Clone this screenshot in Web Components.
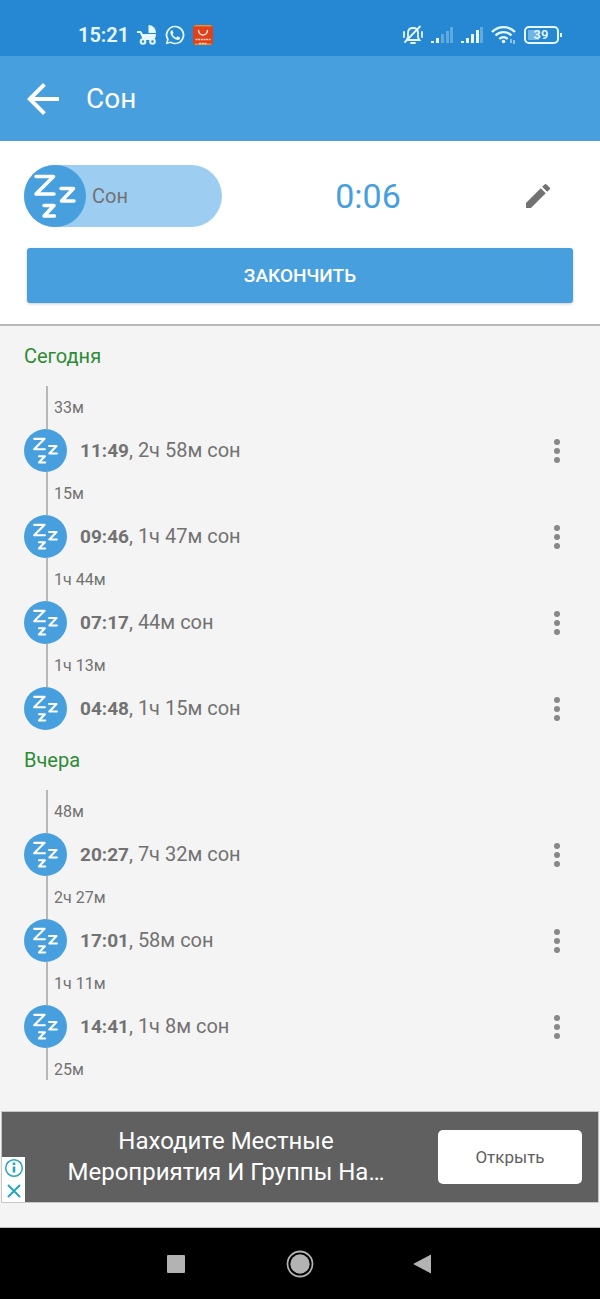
<!DOCTYPE html>
<html lang="ru">
<head>
<meta charset="utf-8">
<meta name="viewport" content="width=device-width, initial-scale=1">
<title>Сон</title>
<style>
  body {
    --blue: #489fdd;
    --grey: #727272;
    margin: 0;
    height: 100vh;
    display: flex;
    flex-direction: column;
    background: #f4f4f4;
    color: var(--grey);
    font-family: Roboto, "Liberation Sans", sans-serif;
    font-size: 20px;
  }
  main { flex: 1; min-height: 0; overflow: hidden; }
</style>
</head>
<body>
  <status-bar></status-bar>
  <app-header>Сон</app-header>
  <sleep-timer label="Сон" time="0:06"></sleep-timer>
  <main>
    <day-log>
      <span slot="title">Сегодня</span>
      <log-gap>33м</log-gap>
      <log-entry time="11:49">2ч 58м сон</log-entry>
      <log-gap>15м</log-gap>
      <log-entry time="09:46">1ч 47м сон</log-entry>
      <log-gap>1ч 44м</log-gap>
      <log-entry time="07:17">44м сон</log-entry>
      <log-gap>1ч 13м</log-gap>
      <log-entry time="04:48">1ч 15м сон</log-entry>
    </day-log>
    <day-log>
      <span slot="title">Вчера</span>
      <log-gap>48м</log-gap>
      <log-entry time="20:27">7ч 32м сон</log-entry>
      <log-gap>2ч 27м</log-gap>
      <log-entry time="17:01">58м сон</log-entry>
      <log-gap>1ч 11м</log-gap>
      <log-entry time="14:41">1ч 8м сон</log-entry>
      <log-gap>25м</log-gap>
    </day-log>
  </main>
  <ad-banner>Находите Местные<br>Мероприятия И Группы На…</ad-banner>
  <nav-bar></nav-bar>

<script>
const base = `
  :host, * { box-sizing: border-box; }
  button { font: inherit; color: inherit; border: 0; padding: 0; margin: 0; background: none; cursor: pointer; }
  svg { display: block; }
`;

function define(name, render) {
  customElements.define(name, class extends HTMLElement {
    constructor() {
      super();
      this.attachShadow({ mode: 'open' });
    }
    connectedCallback() {
      const template = document.createElement('template');
      template.innerHTML = render(this);
      this.shadowRoot.replaceChildren(template.content.cloneNode(true));
    }
  });
}

define('status-bar', () => `
  <style>${base}
    :host { display: flex; flex: none; justify-content: space-between; align-items: center;
      height: 56px; padding: 14px 38px 0 78px; background: #2688d2; color: #e6f7ff; }
    div { display: flex; align-items: center; gap: 8px; }
    time { font-size: 20px; font-weight: 600; line-height: 24px; }
    .battery { position: relative; }
    .battery span { position: absolute; inset: 0 4px 0 0; text-align: center;
      font-size: 13px; font-weight: 600; line-height: 18px; }
  </style>
  <div>
    <time>15:21</time>
    <svg width="20" height="20" viewBox="0 0 20 20" fill="currentColor" aria-hidden="true">
      <path d="M11.500 0a7.500 8 0 0 1 7.500 8h-7.500z"/>
      <path d="M0 6h4l1.800 3H19c0 3-1 5-2.500 6H6L3 8H0z"/>
      <circle cx="6" cy="16.500" r="2.300" fill="#2688d2" stroke="currentColor" stroke-width="2"/>
      <circle cx="15.500" cy="16.500" r="2.300" fill="#2688d2" stroke="currentColor" stroke-width="2"/>
    </svg>
    <svg width="20" height="20" viewBox="0 0 24 24" fill="currentColor" aria-hidden="true">
      <path d="M12 .8A11.200 11.200 0 0 0 2.400 17.700L.8 23.200l5.700-1.500A11.200 11.200 0 1 0 12 .8zm0 2a9.200 9.200 0 1 1-4.900 17l-3.500.8 1-3.400A9.200 9.200 0 0 1 12 2.800z"/>
      <path d="M8.300 6.200c-.5 0-1.900 1-1.900 2.900 0 4 5.300 8.900 9 8.900 1.700 0 2.900-1.200 2.900-2.700l-3.500-1.900-1.500 1.800c-2-.8-3.400-2.200-4.300-4l1.200-1.600-1.300-3.400z"/>
    </svg>
    <svg width="20" height="20" viewBox="0 0 20 20" aria-hidden="true">
      <rect width="20" height="20" rx="3" fill="#e2401b"/>
      <path d="M2 0h16l1.500 1.500H.5zM1 18.500h18L18 20H2z" fill="#f08a24"/>
      <path d="M5.500 5.500c1 6 8 6 9 0" fill="none" stroke="#fff3e8" stroke-width="1.400" stroke-linecap="round"/>
      <path d="M2.500 14.500h15M6 18.500h8" stroke="#ffd8c4" stroke-width="1.500" stroke-dasharray="2 .7"/>
    </svg>
  </div>
  <div>
    <svg width="20" height="20" viewBox="0 0 20 20" fill="none" stroke="currentColor" stroke-width="1.800" aria-hidden="true">
      <path d="M3.500 15h13L15 12.500V8c0-3-2-5-5-5S5 5 5 8v4.500zM8 18h4M1 7v5M19 7v5M17 1.500 2 17" stroke-linecap="round"/>
    </svg>
    <svg width="22" height="18" viewBox="0 0 22 18" fill="currentColor" aria-hidden="true">
      <path d="M0 15h3v2H0zM5 12h3v5H5z"/><path opacity=".3" d="M10 8h3v9h-3zM15 5h3v12h-3zM19 1h3v16h-3z"/>
    </svg>
    <svg width="22" height="18" viewBox="0 0 22 18" fill="currentColor" aria-hidden="true">
      <path d="M0 15h3v2H0zM5 12h3v5H5zM10 8h3v9h-3zM15 4h3v13h-3z"/><path opacity=".3" d="M19 1h3v16h-3z"/>
    </svg>
    <svg width="25" height="20" viewBox="0 0 25 20" fill="none" stroke="currentColor" stroke-width="2.400" aria-hidden="true">
      <path d="M1 7c6.500-6.500 16.500-6.500 23 0M4.500 10.500c4.500-4.500 11.500-4.500 16 0M8.300 14c2.500-2.500 5.900-2.500 8.400 0"/>
      <circle cx="12.500" cy="16.500" r="1.800" fill="currentColor" stroke="none"/>
      <path d="M20 14v4M23 15v4" stroke-width="1.300" opacity=".8"/>
    </svg>
    <div class="battery">
      <svg width="38" height="18" viewBox="0 0 38 18" fill="none" aria-hidden="true">
        <rect x="4" y="4" width="11" height="10" fill="currentColor" opacity=".4"/>
        <rect x="1" y="1" width="33" height="16" rx="4" stroke="currentColor" stroke-width="2"/>
        <path d="M37 7v4" stroke="currentColor" stroke-width="2"/>
      </svg>
      <span>39</span>
    </div>
  </div>
`);

define('app-header', () => `
  <style>${base}
    :host { display: flex; flex: none; align-items: center; gap: 19px; height: 85px; padding-left: 19px;
      background: var(--blue); color: #fff; }
    h1 { margin: 0; font-size: 28px; font-weight: 400; line-height: 36px; }
  </style>
  <button aria-label="Назад">
    <svg width="48" height="48" viewBox="0 0 24 24" fill="currentColor"><path d="M20 11H7.830l5.590-5.590L12 4l-8 8 8 8 1.410-1.410L7.830 13H20z"/></svg>
  </button>
  <h1><slot></slot></h1>
`);

define('zz-icon', () => `
  <style>
    :host { display: block; flex: none; border-radius: 50%; background: var(--blue); color: #fff; }
    svg { display: block; width: 100%; height: 100%; }
  </style>
  <svg viewBox="0 0 62 62" fill="none" stroke="currentColor" stroke-width="3.500" stroke-linecap="round" stroke-linejoin="round" aria-hidden="true">
    <path d="M12 11.500h17.500L12 29h18M37 23.500h12.500L37.500 36H50M20 40.500h10L20 51h10.500"/>
  </svg>
`);

define('sleep-timer', host => `
  <style>${base}
    :host { display: block; flex: none; padding: 24px 27px 21px; background: #fff; border-bottom: 2px solid #b8b8b8; }
    .row { display: flex; align-items: center; margin: 0 11px 21px -3px; }
    .kind { display: flex; align-items: center; gap: 6px; width: 198px; height: 62px; border-radius: 31px; background: #9dcef2; }
    zz-icon { width: 62px; height: 62px; }
    output { flex: 1; text-align: center; font-size: 34px; line-height: 40px; color: var(--blue); }
    .edit { display: grid; place-items: center; width: 48px; height: 48px; }
    .finish { display: block; width: 100%; height: 55px; border-radius: 3px; background: var(--blue); color: #fff;
      font-size: 19px; font-weight: 500; box-shadow: 0 1px 3px #0003; }
  </style>
  <div class="row">
    <button class="kind"><zz-icon></zz-icon>${host.getAttribute('label')}</button>
    <output>${host.getAttribute('time')}</output>
    <button class="edit" aria-label="Изменить">
      <svg width="32" height="32" viewBox="0 0 24 24" fill="currentColor"><path d="M3 17.250V21h3.750L17.810 9.940l-3.750-3.750zM20.710 7.040a1 1 0 0 0 0-1.410l-2.340-2.340a1 1 0 0 0-1.410 0l-1.830 1.830 3.750 3.750z"/></svg>
    </button>
  </div>
  <button class="finish">ЗАКОНЧИТЬ</button>
`);

define('day-log', () => `
  <style>${base}
    :host { display: block; }
    h2 { margin: 0; padding-left: 24px; font-size: 20px; font-weight: 400; line-height: 60px; color: #2e8b35; }
    h2 { height: 60px; }
  </style>
  <h2><slot name="title"></slot></h2>
  <div role="list"><slot></slot></div>
`);

define('log-gap', () => `
  <style>${base}
    :host { display: block; height: 43px; margin-left: 46px; padding-left: 6px; border-left: 2px solid #b8b8b8;
      font-size: 16px; line-height: 43px; }
  </style>
  <slot></slot>
`);

define('log-entry', host => `
  <style>${base}
    :host { display: flex; align-items: center; height: 43px; padding: 0 19px 0 24px; }
    zz-icon { width: 43px; height: 43px; padding: 3px; margin-right: 13px; }
    p { flex: 1; margin: 0; line-height: 24px; }
    b { font-size: 19px; font-weight: 700; }
    button { display: grid; place-items: center; width: 48px; height: 43px; color: #888; }
  </style>
  <zz-icon></zz-icon>
  <p><b>${host.getAttribute('time')}</b>, <slot></slot></p>
  <button aria-label="Меню">
    <svg width="36" height="36" viewBox="0 0 24 24" fill="currentColor"><circle cx="12" cy="6" r="2"/><circle cx="12" cy="12" r="2"/><circle cx="12" cy="18" r="2"/></svg>
  </button>
`);

define('ad-banner', () => `
  <style>${base}
    :host { display: flex; flex: none; align-items: center; gap: 12px; position: relative; height: 92px; margin: 31px 1px 24px;
      padding: 0 16px 0 24px; background: #606060; border: 1px solid #c8c8c8; color: #fff; }
    p { flex: 1; margin: 0; text-align: center; font-size: 24px; line-height: 31px; white-space: nowrap; }
    .open { width: 144px; height: 54px; border-radius: 5px; background: #fff; color: #606060; font-size: 17px; }
    .marks { position: absolute; left: 0; bottom: 0; display: grid; width: 23px; height: 45px; background: #fff; color: #26a5bd; }
    .marks button { display: grid; place-items: center; }
  </style>
  <p><slot></slot></p>
  <button class="open">Открыть</button>
  <div class="marks">
    <button aria-label="О рекламе">
      <svg width="20" height="20" viewBox="0 0 20 20" fill="none" stroke="currentColor"><circle cx="10" cy="10" r="8.300" stroke-width="1.500"/><path d="M10 8.500v6M10 4.500v2.500" stroke-width="2.600"/></svg>
    </button>
    <button aria-label="Закрыть">
      <svg width="20" height="20" viewBox="0 0 20 20" fill="none" stroke="currentColor" stroke-width="2"><path d="m4 4 12 12M16 4 4 16"/></svg>
    </button>
  </div>
`);

define('nav-bar', () => `
  <style>${base}
    :host { display: flex; flex: none; justify-content: center; height: 72px; background: #000; border-top: 1px solid #bbb; color: #b3b3b3; }
    button { display: grid; place-items: center; width: 123px; }
  </style>
  <button aria-label="Недавние"><svg width="28" height="28" viewBox="0 0 28 28" fill="currentColor"><rect x="4" y="5" width="18" height="18" rx="1"/></svg></button>
  <button aria-label="Домой"><svg width="28" height="28" viewBox="0 0 28 28" fill="currentColor"><circle cx="14" cy="14" r="9.700"/><circle cx="14" cy="14" r="12.500" fill="none" stroke="currentColor" stroke-width="1.800"/></svg></button>
  <button aria-label="Назад"><svg width="28" height="28" viewBox="0 0 28 28" fill="currentColor"><path d="M22 4.500v19L5 14.500q-1-.5 0-1z"/></svg></button>
`);
</script>
</body>
</html>
